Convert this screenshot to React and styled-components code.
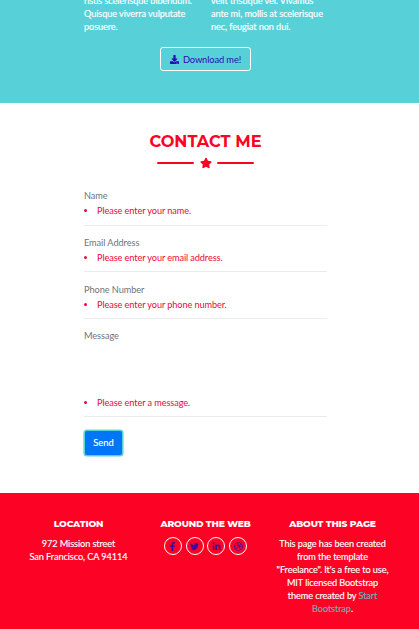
import React from "react";
import styled, { createGlobalStyle } from "styled-components";
import { FaDownload, FaStar, FaFacebookF, FaTwitter, FaLinkedinIn, FaDribbble } from "react-icons/fa";

const GlobalStyle = createGlobalStyle`
  * { box-sizing: border-box; }
  body {
    margin: 0;
    background: #fff;
    font-family: Lato, "Liberation Sans", sans-serif;
    font-size: 9.2px;
    line-height: 13px;
    letter-spacing: -0.1px;
    overflow: hidden;
  }
  p, h2, h4, ul { margin: 0; padding: 0; }
`;

const Page = styled.div`
  height: 629px;
  overflow: hidden;
`;

const About = styled.section`
  display: flex;
  flex-direction: column;
  align-items: center;
  height: 103px;
  padding-right: 8px;
  background: #57d1d7;
  color: #fff;
`;

const AboutColumns = styled.div`
  display: grid;
  grid-template-columns: 127px 116px;
  width: 243px;
  height: 33px;
  margin-bottom: 14px;
  align-content: end;
`;

const AboutText = styled.p`
  white-space: nowrap;
  -webkit-text-stroke: 0.15px currentColor;
`;

const DownloadButton = styled.a`
  display: flex;
  flex: none;
  align-items: center;
  justify-content: center;
  gap: 4px;
  width: 91px;
  height: 24px;
  border: 1px solid #fff;
  border-radius: 3px;
  color: #2410ae;
  font-size: 9.3px;
  white-space: nowrap;
`;

const Contact = styled.section`
  display: flex;
  flex-direction: column;
  align-items: center;
  height: 390px;
  padding: 28px 8px 0 0;
`;

const ContactTitle = styled.h2`
  color: #fc0224;
  font: 700 16.2px/21px Montserrat, Inter, sans-serif;
  letter-spacing: 0;
  white-space: nowrap;
`;

const Divider = styled.div`
  display: flex;
  align-items: center;
  justify-content: center;
  gap: 5.5px;
  height: 12px;
  margin: 5px 0 20px;
  color: #fc0224;
`;

const DividerLine = styled.span`
  width: 37px;
  height: 2px;
  border-radius: 1px;
  background: currentColor;
`;

const Form = styled.form`
  width: 243px;
`;

const Field = styled.div`
  display: flex;
  flex-direction: column;
  justify-content: space-between;
  height: ${(p) => p.$height}px;
  margin-bottom: ${(p) => p.$gap}px;
  padding-bottom: ${(p) => p.$pad}px;
  border-bottom: 1px solid #e9ecef;
`;

const Label = styled.label`
  color: #6c757d;
  letter-spacing: -0.06px;
`;

const Errors = styled.ul`
  display: flex;
  color: #f00838;
  list-style: none;
`;

const ErrorItem = styled.li`
  display: flex;
  align-items: center;
  gap: 10px;
  white-space: nowrap;

  &::before {
    content: "";
    width: 3px;
    height: 3px;
    border-radius: 50%;
    background: currentColor;
  }
`;

const SendButton = styled.button`
  display: block;
  width: 37px;
  height: 24px;
  margin: 0 0 0 1px;
  padding: 0;
  border: 0;
  border-radius: 2px;
  background: #0075f6;
  box-shadow: 0 0 0 1.6px #59d3d5;
  color: #fff;
  font: 9.3px/24px Lato, sans-serif;
  -webkit-text-stroke: 0.15px currentColor;
`;

const Footer = styled.footer`
  display: grid;
  grid-template-columns: repeat(3, 127px);
  height: 136px;
  padding: 24px 0 0 15px;
  background: #fc0224;
  color: #fff;
  text-align: center;
`;

const FooterTitle = styled.h4`
  margin-bottom: 7px;
  font: 800 9.2px/13px Montserrat, Inter, sans-serif;
  letter-spacing: -0.18px;
  white-space: nowrap;
`;

const FooterText = styled.p`
  white-space: nowrap;
  -webkit-text-stroke: 0.15px currentColor;
`;

const FooterLink = styled.a`
  color: #63b5bd;
`;

const Socials = styled.div`
  display: flex;
  justify-content: center;
  gap: 3.8px;
`;

const Social = styled.a`
  display: flex;
  align-items: center;
  justify-content: center;
  width: 18px;
  height: 18px;
  border: 1px solid #fff;
  border-radius: 50%;
  color: #3b0aa5;
`;

const fields = [
  ["Name", "Please enter your name.", 37, 10, 8],
  ["Email Address", "Please enter your email address.", 36, 11, 7],
  ["Phone Number", "Please enter your phone number.", 36, 10, 7],
  ["Message", "Please enter a message.", 88, 14, 7],
];

const socials = [FaFacebookF, FaTwitter, FaLinkedinIn, FaDribbble];

export default function App() {
  return (
    <Page>
      <GlobalStyle />
      <About>
        <AboutColumns>
          <AboutText>
            risus scelerisque bibendum.<br />Quisque viverra vulputate<br />posuere.
          </AboutText>
          <AboutText>
            velit tristique vel. Vivamus<br />ante mi, mollis at scelerisque<br />nec, feugiat non dui.
          </AboutText>
        </AboutColumns>
        <DownloadButton><FaDownload size={9} />Download me!</DownloadButton>
      </About>
      <Contact>
        <ContactTitle>CONTACT ME</ContactTitle>
        <Divider><DividerLine /><FaStar size={12} /><DividerLine /></Divider>
        <Form>
          {fields.map(([label, error, height, gap, pad]) => (
            <Field key={label} $height={height} $gap={gap} $pad={pad}>
              <Label>{label}</Label>
              <Errors><ErrorItem>{error}</ErrorItem></Errors>
            </Field>
          ))}
          <SendButton type="button">Send</SendButton>
        </Form>
      </Contact>
      <Footer>
        <div>
          <FooterTitle>LOCATION</FooterTitle>
          <FooterText>972 Mission street<br />San Francisco, CA 94114</FooterText>
        </div>
        <div>
          <FooterTitle>AROUND THE WEB</FooterTitle>
          <Socials>
            {socials.map((Icon, i) => <Social key={i}><Icon size={9} /></Social>)}
          </Socials>
        </div>
        <div>
          <FooterTitle>ABOUT THIS PAGE</FooterTitle>
          <FooterText>
            This page has been created<br />from the template<br />"Freelance". It's a free to use,<br />
            MIT licensed Bootstrap<br />theme created by <FooterLink>Start<br />Bootstrap</FooterLink>.
          </FooterText>
        </div>
      </Footer>
    </Page>
  );
}
